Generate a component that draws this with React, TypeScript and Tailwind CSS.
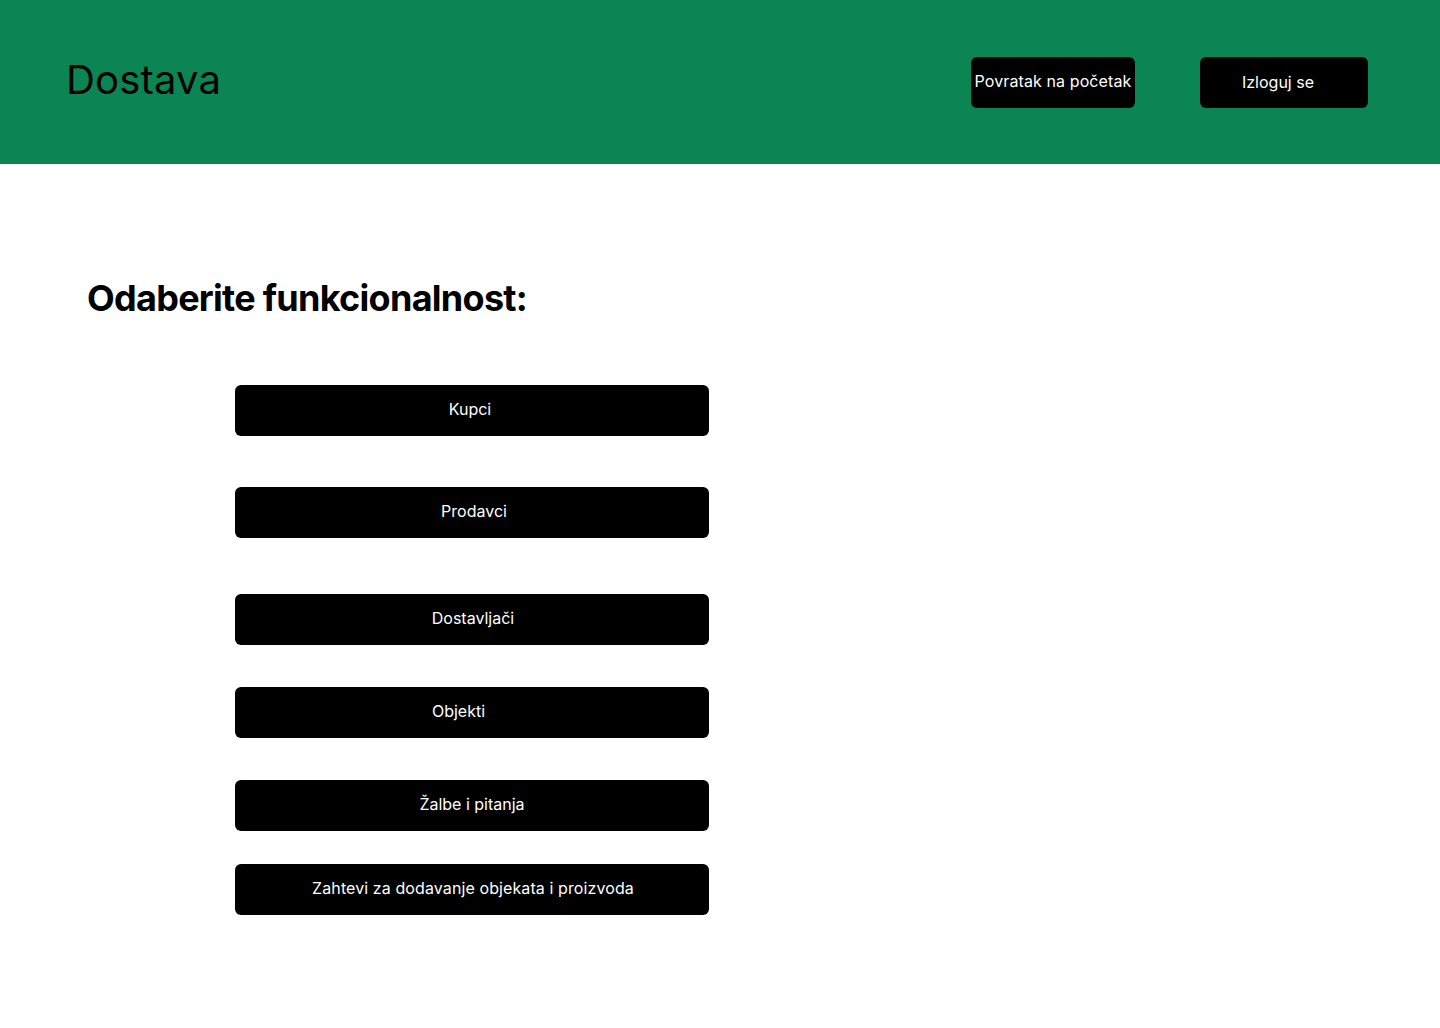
const items = [
  { label: "Kupci", className: "mt-0 pr-[4px]" },
  { label: "Prodavci", className: "mt-[51px] pl-[4px]" },
  { label: "Dostavljači", className: "mt-[56px] pl-[2px]" },
  { label: "Objekti", className: "mt-[42px] pr-[27px]" },
  { label: "Žalbe i pitanja", className: "mt-[42px]" },
  { label: "Zahtevi za dodavanje objekata i proizvoda", className: "mt-[33px] pl-[2px] tracking-[0.1px]" },
];

function MenuButton({ label, className }: { label: string; className: string }) {
  return (
    <button
      className={`w-[474px] h-[51px] bg-black text-white rounded-[6px] text-[16px] flex items-center justify-center pb-[3px] ${className}`}
    >
      {label}
    </button>
  );
}

export default function App() {
  return (
    <div className="min-h-[1028px] bg-white font-['Inter',sans-serif] text-black">
      <header className="h-[164px] bg-[#0a8553] flex items-center justify-between pl-[66px] pr-[72px]">
        <h1 className="text-[40px] font-normal tracking-[0.2px] text-black leading-none mt-[-4px]">
          Dostava
        </h1>
        <div className="flex gap-[65px]">
          <button className="w-[164px] h-[51px] bg-black text-white rounded-[6px] text-[16px] tracking-[0.1px] flex items-center justify-center pb-[3px]">
            Povratak na početak
          </button>
          <button className="w-[168px] h-[51px] bg-black text-white rounded-[6px] text-[16px] flex items-center justify-center pr-[12px]">
            Izloguj se
          </button>
        </div>
      </header>
      <main className="pl-[87px] pt-[112px]">
        <h2 className="text-[36px] font-bold leading-[44px] tracking-[-0.72px]">
          Odaberite funkcionalnost:
        </h2>
        <section className="flex flex-col pl-[148px] mt-[65px]">
          {items.map((item) => (
            <MenuButton key={item.label} label={item.label} className={item.className} />
          ))}
        </section>
      </main>
    </div>
  );
}
